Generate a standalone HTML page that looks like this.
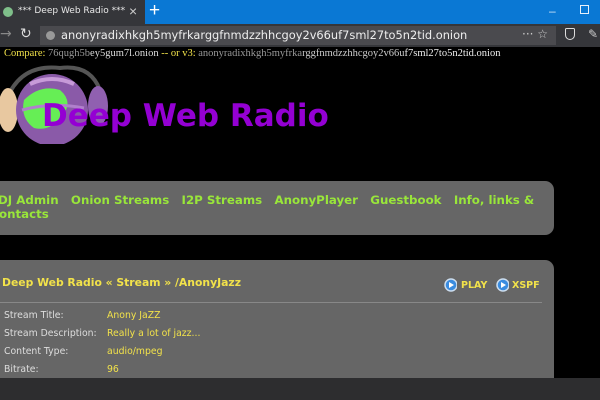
<!DOCTYPE html>
<html style="width:600px;height:400px;overflow:hidden"><head><style>
*{margin:0;padding:0;box-sizing:border-box}
body{width:600px;height:400px;overflow:hidden;background:#000;position:relative;font-family:"DejaVu Sans",Verdana,sans-serif}
.abs{position:absolute;white-space:nowrap}
.nav{color:#99e63a;font-weight:bold;font-size:11.8px}
.lbl{color:#ddd;font-size:9.3px}
.val{color:#f2e24a;font-size:9.3px}
</style></head><body>
<div class="abs" style="left:0;top:0;width:600px;height:24px;background:#0a78d4"></div>
<div class="abs" style="left:0;top:0;width:145px;height:24px;background:#35363a"></div>
<div class="abs" style="left:3px;top:7px;width:10px;height:10px;border-radius:50%;background:#7fbf8a"></div>
<div class="abs" style="left:18px;top:6px;font:9px 'DejaVu Sans',sans-serif;color:#e8e8e8">*** Deep Web Radio ***</div>
<div class="abs" style="left:129px;top:3px;font:14px 'Liberation Sans',sans-serif;color:#ccc">×</div>
<div class="abs" style="left:149px;top:0;font:19px 'Liberation Sans',sans-serif;color:#fff">+</div>
<div class="abs" style="left:549px;top:4px;font:12px 'Liberation Sans',sans-serif;color:#cfe3f7">–</div>
<div class="abs" style="left:580px;top:5px;width:9px;height:9px;border:1px solid #e8f0fa"></div>
<div class="abs" style="left:0;top:24px;width:600px;height:23px;background:#35363a"></div>
<div class="abs" style="left:0;top:26px;font:14px 'DejaVu Sans',sans-serif;color:#888">→</div>
<div class="abs" style="left:20px;top:26px;font:14px 'DejaVu Sans',sans-serif;color:#ddd">↻</div>
<div class="abs" style="left:40px;top:26px;width:516px;height:19px;background:#4a4a4e"></div>
<div class="abs" style="left:46px;top:31px;width:9px;height:9px;border-radius:50%;background:#999"></div>
<div class="abs" style="left:61px;top:28px;font:11.4px 'DejaVu Sans',sans-serif;color:#eee">anonyradixhkgh5myfrkarggfnmdzzhhcgoy2v66uf7sml27to5n2tid.onion</div>
<div class="abs" style="left:522px;top:27px;font:12px 'DejaVu Sans',sans-serif;color:#ccc">··· ☆</div>
<div class="abs" style="left:565px;top:28px;width:10px;height:12px;border:1.5px solid #ddd;border-radius:2px 2px 6px 6px"></div>
<div class="abs" style="left:588px;top:27px;font:12px 'DejaVu Sans',sans-serif;color:#ccc">✎</div>

<div class="abs" style="left:4px;top:48px;font:10.5px 'Liberation Serif',serif;color:#f2e24a">Compare: <span style="color:#999">76qugh5b</span><span style="color:#ddd">ey5gum7l.onion</span> -- or v3: <span style="color:#999">anonyradixhkgh5myfrka</span><span style="color:#ccc">rggfnmdzzhhcgoy2v66u</span><span style="color:#eee">f7sml27to5n2tid.onion</span></div>

<svg class="abs" style="left:0;top:62px" width="110" height="82">
<path d="M10 30 Q25 2 60 6 Q90 2 100 28" stroke="#555" stroke-width="4" fill="none"/>
<ellipse cx="8" cy="48" rx="10" ry="22" fill="#e8c8a0"/>
<ellipse cx="98" cy="44" rx="10" ry="20" fill="#9060b0"/>
<circle cx="52" cy="48" r="36" fill="#8a5aa8"/>
<path d="M24 38 Q40 22 60 28 Q74 40 62 54 Q50 70 34 66 Q20 56 24 38Z" fill="#66ee55"/>
<path d="M30 22 Q52 12 74 22" stroke="#c79ad8" stroke-width="4" fill="none"/>
<path d="M22 48 Q52 40 84 46" stroke="#b080cc" stroke-width="3" fill="none"/>
</svg>
<div class="abs" style="left:42px;top:98px;font:bold 31px 'DejaVu Sans',Verdana,sans-serif;color:#9400d3">Deep Web Radio</div>

<div class="abs" style="left:-12px;top:181px;width:566px;height:54px;background:#666;border-radius:9px"></div>
<div class="abs nav" style="left:-2px;top:193px">DJ Admin&nbsp;&nbsp; Onion Streams&nbsp;&nbsp; I2P Streams&nbsp;&nbsp; AnonyPlayer&nbsp;&nbsp; Guestbook&nbsp;&nbsp; Info, links &amp;</div>
<div class="abs nav" style="left:-8px;top:207px">contacts</div>

<div class="abs" style="left:-12px;top:260px;width:566px;height:160px;background:#666;border-radius:9px"></div>
<div class="abs" style="left:2px;top:276px;font-weight:bold;font-size:10.8px;color:#f2e24a">Deep Web Radio « Stream » /AnonyJazz</div>
<svg class="abs" style="left:443px;top:278px" width="14" height="14"><circle cx="8" cy="7" r="6" fill="#3a8ce0" stroke="#cde" stroke-width="1.5"/><path d="M6 4 L11 7 L6 10Z" fill="#fff"/></svg>
<div class="abs" style="left:461px;top:280px;font-weight:bold;font-size:9.5px;color:#f2e24a">PLAY</div>
<svg class="abs" style="left:495px;top:278px" width="14" height="14"><circle cx="8" cy="7" r="6" fill="#3a8ce0" stroke="#cde" stroke-width="1.5"/><path d="M6 4 L11 7 L6 10Z" fill="#fff"/></svg>
<div class="abs" style="left:512px;top:280px;font-weight:bold;font-size:9.5px;color:#f2e24a">XSPF</div>
<div class="abs" style="left:0;top:302px;width:542px;height:1px;background:#888"></div>
<div class="abs lbl" style="left:4px;top:310px">Stream Title:</div><div class="abs val" style="left:107px;top:310px">Anony JaZZ</div>
<div class="abs lbl" style="left:4px;top:328px">Stream Description:</div><div class="abs val" style="left:107px;top:328px">Really a lot of jazz...</div>
<div class="abs lbl" style="left:4px;top:346px">Content Type:</div><div class="abs val" style="left:107px;top:346px">audio/mpeg</div>
<div class="abs lbl" style="left:4px;top:364px">Bitrate:</div><div class="abs val" style="left:107px;top:364px">96</div>
<div class="abs" style="left:0;top:378px;width:600px;height:22px;background:#2d2d2f"></div>
</body></html>
